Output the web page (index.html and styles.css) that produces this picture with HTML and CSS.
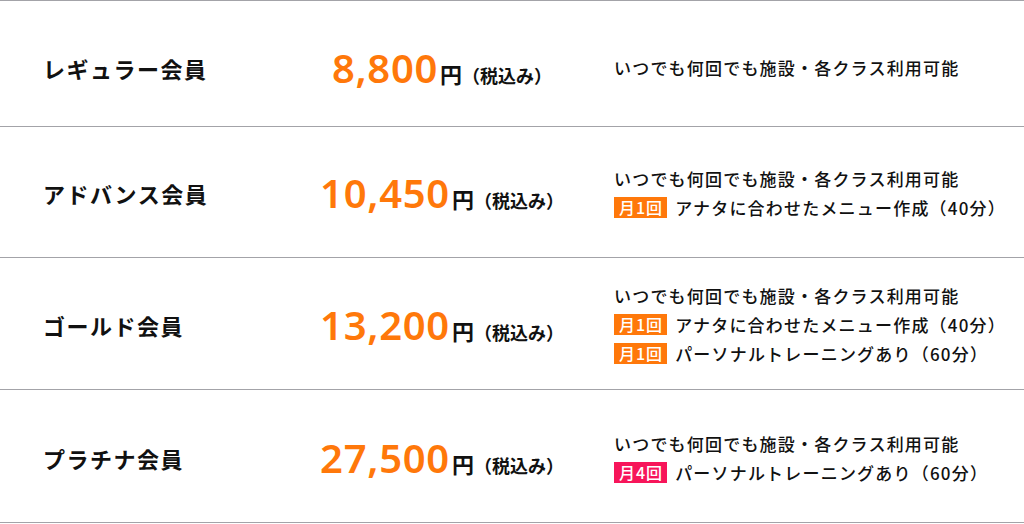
FILE: index.html
```html
<!DOCTYPE html>
<html lang="ja">
<head>
<meta charset="utf-8">
<link rel="stylesheet" href="styles.css">
</head>
<body>
<div class="plans">
  <div class="plan plan-first">
    <div class="name">レギュラー会員</div>
    <div class="price"><span class="num">8,800</span><span class="yen">円</span><span class="tax">（税込み）</span></div>
    <div class="features">
      <div class="line">いつでも何回でも施設・各クラス利用可能</div>
    </div>
  </div>
  <div class="plan plan-2">
    <div class="name">アドバンス会員</div>
    <div class="price"><span class="num">10,450</span><span class="yen">円</span><span class="tax">（税込み）</span></div>
    <div class="features">
      <div class="line">いつでも何回でも施設・各クラス利用可能</div>
      <div class="line"><span class="badge">月1回</span>アナタに合わせたメニュー作成（40分）</div>
    </div>
  </div>
  <div class="plan plan-3">
    <div class="name">ゴールド会員</div>
    <div class="price"><span class="num">13,200</span><span class="yen">円</span><span class="tax">（税込み）</span></div>
    <div class="features">
      <div class="line">いつでも何回でも施設・各クラス利用可能</div>
      <div class="line"><span class="badge">月1回</span>アナタに合わせたメニュー作成（40分）</div>
      <div class="line"><span class="badge">月1回</span>パーソナルトレーニングあり（60分）</div>
    </div>
  </div>
  <div class="plan plan-4">
    <div class="name">プラチナ会員</div>
    <div class="price"><span class="num">27,500</span><span class="yen">円</span><span class="tax">（税込み）</span></div>
    <div class="features">
      <div class="line">いつでも何回でも施設・各クラス利用可能</div>
      <div class="line"><span class="badge badge-pink">月4回</span>パーソナルトレーニングあり（60分）</div>
    </div>
  </div>
</div>
</body>
</html>
```

FILE: styles.css
```css
html, body {
  margin: 0;
  padding: 0;
  background: #fff;
}
body {
  font-family: "Noto Sans CJK JP", "Noto Sans", sans-serif;
  color: #111;
}
.plans {
  width: 1024px;
  border-top: 1px solid #a3a3a8;
}
.plan {
  display: grid;
  grid-template-columns: 290px 300px 1fr;
  align-items: center;
  border-bottom: 1px solid #a3a3a8;
  box-sizing: border-box;
}
.plan-first { height: 126px; padding-top: 8px; }
.plan-2 { height: 131px; padding-top: 2px; }
.plan-3 { height: 132px; padding-top: 2px; }
.plan-4 { height: 133px; padding-top: 4px; }

.name {
  padding-left: 43px;
  font-size: 22px;
  font-weight: 700;
  letter-spacing: 1.5px;
  line-height: 28px;
}
.price {
  display: flex;
  justify-content: center;
  align-items: baseline;
  padding-left: 4px;
}
.num {
  font-family: "Noto Sans", "Liberation Sans", sans-serif;
  font-weight: 600;
  font-size: 40px;
  line-height: 44px;
  color: #ff780a;
  letter-spacing: 0.7px;
}
.yen {
  font-size: 22px;
  font-weight: 700;
  margin-left: 2px;
}
.tax {
  font-size: 18px;
  font-weight: 700;
  margin-left: 0;
}
.features {
  padding-left: 24px;
}
.line {
  font-size: 17px;
  font-weight: 500;
  letter-spacing: 1.2px;
  line-height: 29px;
  white-space: nowrap;
  display: flex;
  align-items: center;
}
.badge {
  display: inline-block;
  background: #ff780a;
  color: #fff;
  font-size: 16px;
  font-weight: 500;
  letter-spacing: 1px;
  line-height: 21px;
  height: 21px;
  padding: 0 4px 0 5px;
  margin-right: 8px;
}
.badge-pink {
  background: #f7155a;
}
```
